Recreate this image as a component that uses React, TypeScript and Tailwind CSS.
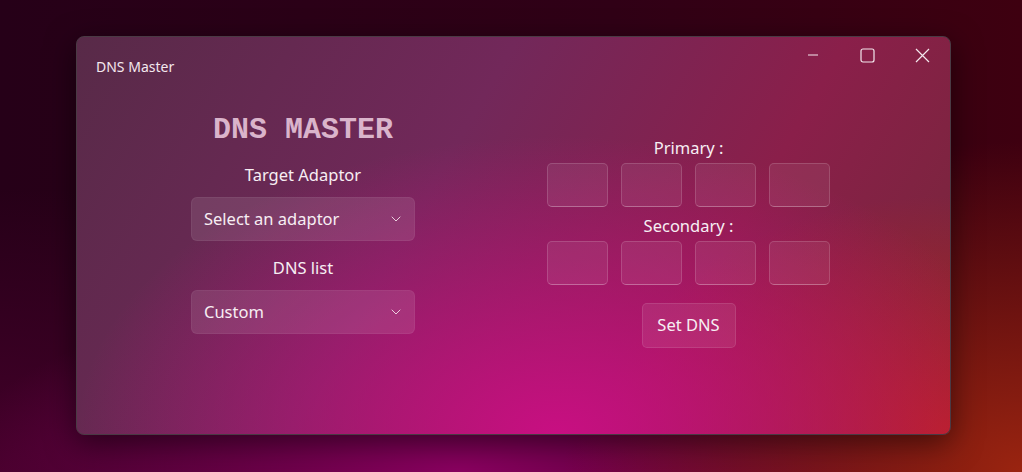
import { ChevronDown } from 'lucide-react'

const ui = { fontFamily: '"Noto Sans", "Open Sans", sans-serif' }

function Select({ label }: { label: string }) {
  return (
    <div className="flex h-[44px] w-[224px] items-center justify-between rounded-[6px] border border-white/5 bg-white/10 pl-[12px] pr-[10px]">
      <span className="text-[16.5px] leading-[24px] text-[#f7eef3]">{label}</span>
      <ChevronDown className="h-[16px] w-[16px] text-[#f1dbe6]" strokeWidth={1.4} />
    </div>
  )
}

function OctetRow() {
  return (
    <div className="flex gap-[13px]">
      {[0, 1, 2, 3].map((i) => (
        <div
          key={i}
          className="h-[44px] w-[61px] rounded-[5px] border border-white/15 border-b-white/30 bg-white/[0.07]"
        />
      ))}
    </div>
  )
}

function CaptionButtons() {
  return (
    <div className="flex text-[#f4e8ee]">
      <div className="flex h-[36px] w-[55px] items-center justify-center">
        <svg width="12" height="12" viewBox="0 0 12 12">
          <path d="M1 6h10" stroke="currentColor" strokeWidth="1" />
        </svg>
      </div>
      <div className="flex h-[36px] w-[55px] items-center justify-center">
        <svg width="15" height="15" viewBox="0 0 15 15">
          <rect x="1" y="1" width="13" height="13" rx="2" fill="none" stroke="currentColor" strokeWidth="1.2" />
        </svg>
      </div>
      <div className="flex h-[36px] w-[55px] items-center justify-center">
        <svg width="15" height="15" viewBox="0 0 15 15">
          <path d="M1 1l13 13M14 1L1 14" stroke="currentColor" strokeWidth="1.2" />
        </svg>
      </div>
    </div>
  )
}

export default function App() {
  return (
    <div
      className="h-[472px] w-[1022px] overflow-hidden bg-[radial-gradient(ellipse_45%_70%_at_100%_100%,#9a2410_0%,transparent_100%),radial-gradient(ellipse_50%_40%_at_45%_100%,#8a0060_0%,transparent_100%),radial-gradient(ellipse_50%_60%_at_0%_100%,#44002a_0%,transparent_100%),linear-gradient(90deg,#260018_0%,#300016_60%,#3e0010_100%)] pl-[76px] pt-[36px]"
      style={ui}
    >
      <div className="h-[399px] w-[875px] overflow-hidden rounded-[8px] border border-[#4a3a44] bg-[radial-gradient(ellipse_55%_75%_at_55%_100%,#c80f82_0%,rgba(200,15,130,0)_100%),radial-gradient(ellipse_40%_60%_at_100%_100%,#b8231f_0%,rgba(184,35,31,0)_100%),linear-gradient(120deg,#582a48_0%,#72285a_40%,#8a1f4a_70%,#742838_100%)] shadow-[0_8px_30px_rgba(0,0,0,0.5)]">
        <div className="flex items-start justify-between">
          <div className="pl-[19px] pt-[20px] text-[14px] leading-[20px] text-[#f4e8ee]">DNS Master</div>
          <CaptionButtons />
        </div>

        <div className="flex items-start pl-[114px]">
          <div className="flex w-[224px] flex-col items-center pt-[35px]">
            <h1
              className="text-[30px] font-bold leading-[36px] text-[#dab4cb]"
              style={{ fontFamily: '"Liberation Mono", "DejaVu Sans Mono", monospace' }}
            >
              DNS MASTER
            </h1>
            <div className="mt-[15px] text-[16.5px] leading-[24px] text-[#f7eef3]">Target Adaptor</div>
            <div className="mt-[10px]">
              <Select label="Select an adaptor" />
            </div>
            <div className="mt-[15px] text-[16.5px] leading-[24px] text-[#f7eef3]">DNS list</div>
            <div className="mt-[10px]">
              <Select label="Custom" />
            </div>
          </div>

          <div className="ml-[132px] flex w-[283px] flex-col items-center pt-[59px]">
            <div className="text-[16.5px] leading-[24px] text-[#f7eef3]">Primary :</div>
            <div className="mt-[3px]">
              <OctetRow />
            </div>
            <div className="mt-[7px] text-[16.5px] leading-[24px] text-[#f7eef3]">Secondary :</div>
            <div className="mt-[3px]">
              <OctetRow />
            </div>
            <button className="mt-[18px] h-[45px] w-[94px] rounded-[5px] border border-white/10 bg-white/[0.08] text-[16.5px] text-[#f7eef3]">
              Set DNS
            </button>
          </div>
        </div>
      </div>
    </div>
  )
}
